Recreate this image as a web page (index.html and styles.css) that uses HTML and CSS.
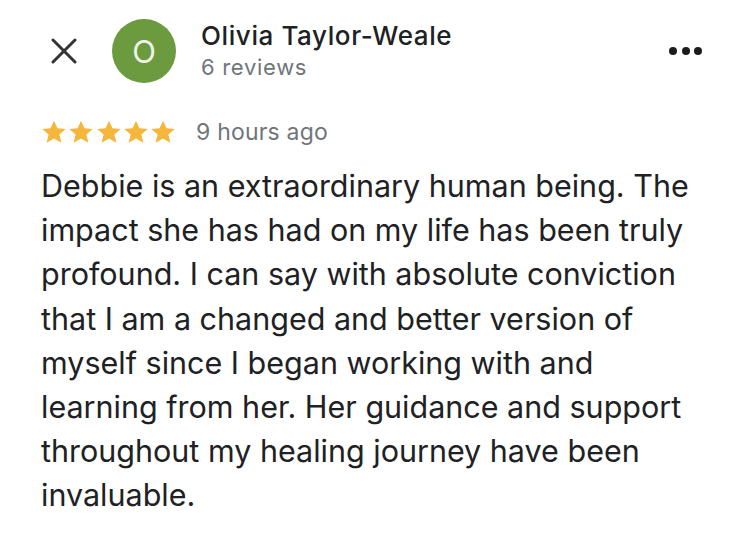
FILE: index.html
```html
<!DOCTYPE html>
<html>
<head>
<meta charset="utf-8">
<link rel="stylesheet" href="styles.css">
</head>
<body>
<div class="review">
  <div class="header">
    <svg class="close" width="26" height="26" viewBox="0 0 26 26"><path d="M2 2L24 24M24 2L2 24" stroke="#333" stroke-width="3" stroke-linecap="round"/></svg>
    <div class="avatar">O</div>
    <div class="who">
      <div class="name">Olivia Taylor-Weale</div>
      <div class="count">6 reviews</div>
    </div>
    <div class="more"><span></span><span></span><span></span></div>
  </div>
  <div class="meta">
    <div class="stars">
      <svg viewBox="0 0 24 24"><path d="M12 1.5l3.2 7.1 7.6.7-5.8 5.1 1.8 7.6L12 18l-6.8 4 1.8-7.6-5.8-5.1 7.6-.7z"/></svg>
      <svg viewBox="0 0 24 24"><path d="M12 1.5l3.2 7.1 7.6.7-5.8 5.1 1.8 7.6L12 18l-6.8 4 1.8-7.6-5.8-5.1 7.6-.7z"/></svg>
      <svg viewBox="0 0 24 24"><path d="M12 1.5l3.2 7.1 7.6.7-5.8 5.1 1.8 7.6L12 18l-6.8 4 1.8-7.6-5.8-5.1 7.6-.7z"/></svg>
      <svg viewBox="0 0 24 24"><path d="M12 1.5l3.2 7.1 7.6.7-5.8 5.1 1.8 7.6L12 18l-6.8 4 1.8-7.6-5.8-5.1 7.6-.7z"/></svg>
      <svg viewBox="0 0 24 24"><path d="M12 1.5l3.2 7.1 7.6.7-5.8 5.1 1.8 7.6L12 18l-6.8 4 1.8-7.6-5.8-5.1 7.6-.7z"/></svg>
    </div>
    <span class="time">9 hours ago</span>
  </div>
  <p class="text">Debbie is an extraordinary human being. The impact she has had on my life has been truly profound. I can say with absolute conviction that I am a changed and better version of myself since I began working with and learning from her. Her guidance and support throughout my healing journey have been invaluable.</p>
</div>
</body>
</html>
```
FILE: styles.css
```css
html, body {
  margin: 0;
  padding: 0;
  background: #fff;
}
body {
  width: 750px;
  height: 543px;
  overflow: hidden;
  font-family: Inter, "Noto Sans", sans-serif;
  color: #222;
}
.review {
  padding: 19px 48px 0 41px;
}
.header {
  display: flex;
  align-items: center;
  height: 64px;
}
.close {
  margin-left: 10px;
  flex: none;
}
.avatar {
  flex: none;
  width: 64px;
  height: 64px;
  border-radius: 50%;
  background: #6b9a3f;
  color: #eef5e6;
  font-size: 31px;
  display: flex;
  align-items: center;
  justify-content: center;
  margin-left: 35px;
}
.who {
  flex: 1;
  margin-left: 25px;
  margin-top: -1px;
}
.name {
  font-size: 26px;
  line-height: 32px;
  color: #202124;
  font-weight: 500;
  letter-spacing: 0.6px;
}
.count {
  font-size: 22px;
  line-height: 30px;
  color: #70757a;
  letter-spacing: 0.7px;
}
.more {
  display: flex;
  gap: 4.5px;
}
.more span {
  width: 8px;
  height: 8px;
  border-radius: 50%;
  background: #1c1c1c;
}
.meta {
  display: flex;
  align-items: center;
  margin-top: 36px;
  height: 26px;
}
.stars {
  display: flex;
  gap: 1.25px;
}
.stars svg {
  width: 26px;
  height: 26px;
  fill: #f4b73b;
}
.time {
  margin-left: 20px;
  font-size: 23px;
  color: #70757a;
  letter-spacing: 0.2px;
}
.text {
  margin: 19px 0 0;
  width: 657px;
  font-size: 30.5px;
  line-height: 44.2px;
  color: #202124;
}
```
